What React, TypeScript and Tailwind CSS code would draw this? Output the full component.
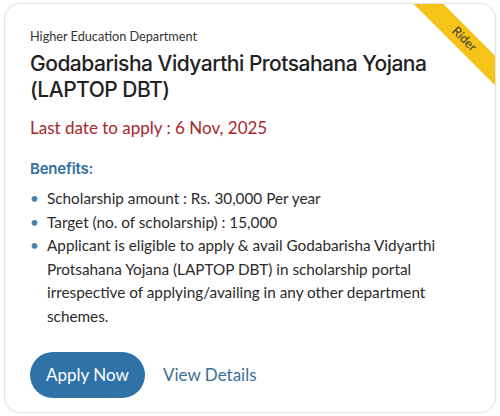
export default function App() {
  const benefits = [
    'Scholarship amount : Rs. 30,000 Per year',
    'Target (no. of scholarship) : 15,000',
    'Applicant is eligible to apply & avail Godabarisha Vidyarthi Protsahana Yojana (LAPTOP DBT) in scholarship portal irrespective of applying/availing in any other department schemes.',
  ];

  return (
    <div className="w-[500px] h-[416px] bg-white p-[3px_4px] overflow-hidden" style={{ fontFamily: 'Lato, "Open Sans", sans-serif' }}>
      <div className="relative h-[410px] rounded-[16px] border border-[#e4e4e4] bg-white overflow-hidden shadow-[0_0_3px_rgba(0,0,0,0.06)] pl-[25px] pr-6 pt-[22px]">
        {/* corner ribbon */}
        <div className="absolute top-[25px] right-[-44px] w-[150px] h-[21px] rotate-45 bg-[#f6c419] flex items-center justify-center text-[12.5px] text-[#3a3a3a]">
          Rider
        </div>

        <p className="text-[12.7px] leading-[20px] text-[#333]">Higher Education Department</p>
        <h1 className="mt-[5px] text-[21px] leading-[26px] font-medium text-[#222] tracking-[-0.5px]" style={{ fontFamily: 'Inter, sans-serif' }}>
          Godabarisha Vidyarthi Protsahana Yojana (LAPTOP DBT)
        </h1>
        <p className="mt-[13px] text-[17px] leading-[24px] text-[#a8262c]">Last date to apply : 6 Nov, 2025</p>

        <p className="mt-[19px] text-[15px] leading-[20px] font-semibold text-[#33709e] tracking-[-0.2px]" style={{ fontFamily: 'Inter, sans-serif' }}>
          Benefits:
        </p>
        <ul className="mt-[8px] pr-[22px]">
          {benefits.map((b) => (
            <li key={b} className="flex text-[15.3px] leading-[23.5px] text-[#2b2b2b]">
              <span className="w-[17px] shrink-0 text-[#4c7fa6]">•</span>
              <span>{b}</span>
            </li>
          ))}
        </ul>

        <div className="mt-[24px] flex items-center gap-[18px]">
          <button className="h-[46px] w-[115px] rounded-full bg-[#2e72a8] text-white text-[17px]">Apply Now</button>
          <a className="text-[17px] text-[#3c6f96]">View Details</a>
        </div>
      </div>
    </div>
  );
}
